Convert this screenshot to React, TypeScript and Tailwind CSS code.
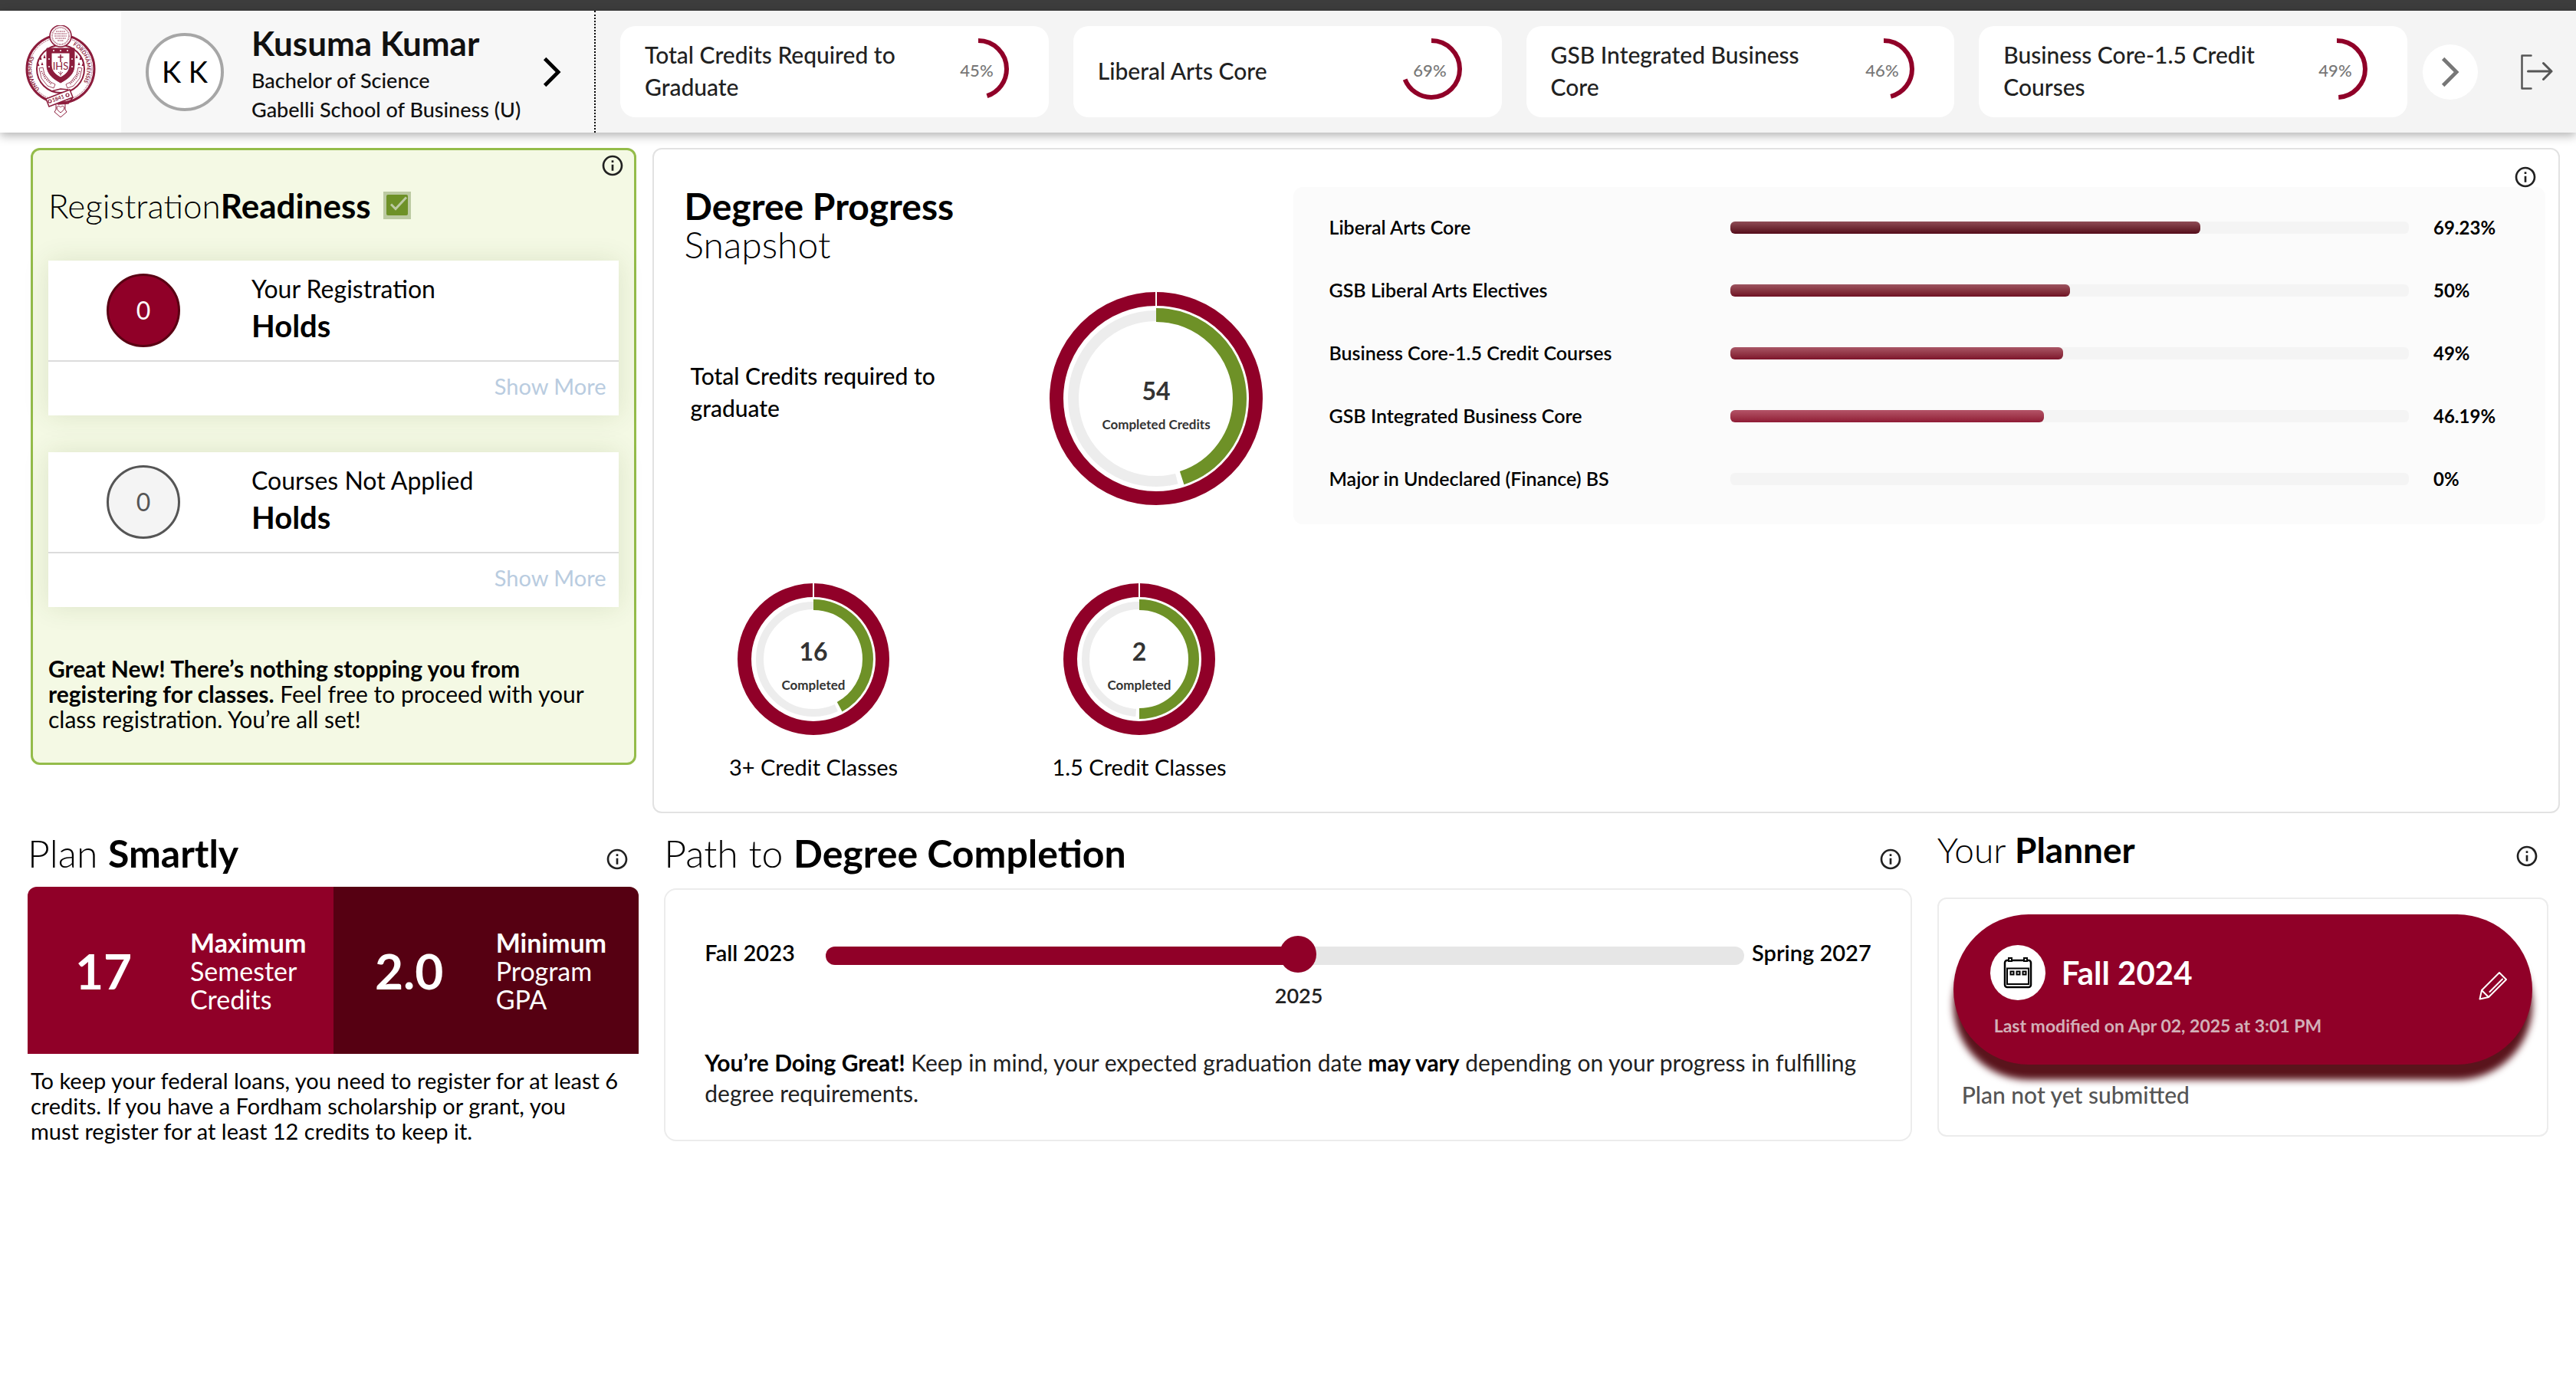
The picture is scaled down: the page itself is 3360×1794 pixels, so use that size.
import type { ReactNode } from 'react';
import { MdArrowForwardIos, MdInfoOutline } from 'react-icons/md';

const requirements = [
  { label: 'Total Credits Required to Graduate', percent: 45 },
  { label: 'Liberal Arts Core', percent: 69 },
  { label: 'GSB Integrated Business Core', percent: 46 },
  { label: 'Business Core-1.5 Credit Courses', percent: 49 },
];

const progressRows = [
  { label: 'Liberal Arts Core', percent: 69.23, fill: 'from-[#8f4c56] to-[#550b1b]' },
  { label: 'GSB Liberal Arts Electives', percent: 50, fill: 'from-[#9d5460] to-[#6f1024]' },
  { label: 'Business Core-1.5 Credit Courses', percent: 49, fill: 'from-[#a95666] to-[#7d132b]' },
  { label: 'GSB Integrated Business Core', percent: 46.19, fill: 'from-[#b45468] to-[#8f1a35]' },
  { label: 'Major in Undeclared (Finance) BS', percent: 0, fill: 'from-[#b45468] to-[#8f1a35]' },
];

// Position of the current year between the first and the last term (0-1000)
const pathValue = 515;

function InfoButton({ label, className = '' }: { label: string; className?: string }) {
  return (
    <button type="button" aria-label={label} className={`shrink-0 text-[#212121] ${className}`}>
      <MdInfoOutline size={32} />
    </button>
  );
}

function UniversitySeal() {
  return (
    <svg viewBox="0 0 92 120" className="h-[120px] w-[92px]" fill="none" stroke="#8c1c3c" aria-label="Fordham University">
      {/* buckle tail */}
      <path d="M40 98v12l-2 3 8 7 8-7-2-3V98z" fill="#fff" strokeWidth="1" />
      <path d="M41 107c2-3 4-1 5 0 1-1 3-3 5 0 0 4-3 5-5 7-2-2-5-3-5-7z" strokeWidth="1" />
      <circle cx="46" cy="57" r="44" fill="#fff" strokeWidth="3" />
      <circle cx="46" cy="57" r="41" strokeWidth="1" strokeDasharray="1 1" />
      <circle cx="46" cy="57" r="31" strokeWidth="2" />
      <path id="seal-left-arc" d="M22.5 86.500A37.500 37.500 0 0 1 32 22.300" stroke="none" />
      <path id="seal-right-arc" d="M62 26A34.800 34.800 0 0 1 63 87" stroke="none" />
      <g fill="#8c1c3c" stroke="none" fontSize="7" fontWeight="700">
        <text>
          <textPath href="#seal-left-arc" startOffset="5">UNIVERSITAS</textPath>
        </text>
        <text>
          <textPath href="#seal-right-arc">FORDHAMENSIS</textPath>
        </text>
      </g>
      {/* flames and ribbon either side of the shield */}
      <g fill="#8c1c3c" stroke="none">
        <path d="M20 40l1.500 5h-3zM25 38l1.500 5h-3zM22 48l1.500 4h-3zM17 49l1.500 4h-3zM67 38l1.500 5h-3zM72 40l1.500 5h-3zM70 48l1.500 4h-3zM75 49l1.500 4h-3z" />
      </g>
      <path d="M18 56l5-1 2 9 8 10 6 3-2 5-8-3-8-10zM74 56l-5-1-2 9-8 10-6 3 2 5 8-3 8-10z" strokeWidth=".8" />
      <path d="M21 60l5 9 8 8M71 60l-5 9-8 8" strokeWidth="2" strokeDasharray="1 1.500" />
      {/* shield */}
      <path d="M28 30h36v22c0 12-9 18-18 23-9-5-18-11-18-23z" fill="#8c1c3c" />
      <path d="M34 36h24v16c0 8-6 13-12 16-6-3-12-8-12-16z" fill="#fff" strokeWidth="1" />
      <g fill="#fff" stroke="none">
        <circle cx="37" cy="33" r="1" />
        <circle cx="46" cy="33" r="1" />
        <circle cx="55" cy="33" r="1" />
        <circle cx="31" cy="44" r="1" />
        <circle cx="61" cy="44" r="1" />
        <circle cx="31" cy="54" r="1" />
        <circle cx="61" cy="54" r="1" />
      </g>
      <path d="M46 38v10M42.500 41.500h7" strokeWidth="1.500" />
      <text x="46" y="58" textAnchor="middle" fontSize="13" fill="#8c1c3c" stroke="none">
        IHS
      </text>
      <path d="M43 61l3 3 3-3M46 60v6" strokeWidth=".8" />
      {/* upper medallion */}
      <circle cx="46" cy="14" r="14" fill="#fff" strokeWidth="1.500" />
      <circle cx="46" cy="14" r="11" strokeWidth="2" strokeDasharray="1 1" opacity=".7" />
      <path d="M40 8h12M38 11h16M38 14h16M39 17h14M42 20h8" strokeWidth="1.200" strokeDasharray="2 .5" opacity=".8" />
      {/* belt with the founding year */}
      <path d="M27 96l31-12 4 10-31 12z" fill="#fff" strokeWidth="1.500" />
      <path d="M34 86l12-3 10 1M62 94l-6 8-14 1" strokeWidth="1.500" />
      <circle cx="32" cy="99" r="2" strokeWidth="1.200" />
      <circle cx="55" cy="91" r="2" strokeWidth="1.200" />
      <text x="43" y="98" textAnchor="middle" fontSize="7" fontWeight="700" fill="#8c1c3c" stroke="none" transform="rotate(-20 42 96)">
        1841
      </text>
    </svg>
  );
}

function HeaderRing({ percent }: { percent: number }) {
  return (
    <svg viewBox="0 0 80 80" className="mr-5 mb-[7px] size-20 shrink-0">
      <circle
        cx="40"
        cy="40"
        r="37"
        fill="none"
        stroke="#900028"
        strokeWidth="6"
        pathLength="100"
        strokeDasharray={`${percent} 100`}
        transform="rotate(-90 40 40)"
      />
      <text x="38" y="50" textAnchor="middle" fontSize="22" fontWeight="500" fill="#777">
        {percent}%
      </text>
    </svg>
  );
}

type DonutProps = {
  radius: number;
  percent: number;
  value: string;
  caption: string;
  green: number;
  grey: number;
  className: string;
};

function Donut({ radius, percent, value, caption, green, grey, className }: DonutProps) {
  const size = radius * 2;
  const greenR = radius - 21 - green / 2;
  const greyR = radius - 24 - grey / 2;
  return (
    <svg viewBox={`0 0 ${size} ${size}`} className={className} fill="none">
      <circle cx={radius} cy={radius} r={radius - 9} stroke="#900028" strokeWidth="18" />
      <path d={`M${radius} 0v18`} stroke="#fff" strokeWidth="2" />
      <g transform={`rotate(-90 ${radius} ${radius})`}>
        <circle cx={radius} cy={radius} r={greyR} stroke="#ededed" strokeWidth={grey} />
        <circle
          cx={radius}
          cy={radius}
          r={greenR}
          stroke="#fff"
          strokeWidth={green + 2}
          pathLength="100"
          strokeDasharray={`${percent + 1} 100`}
        />
        <circle
          cx={radius}
          cy={radius}
          r={greenR}
          stroke="#6e9127"
          strokeWidth={green}
          pathLength="100"
          strokeDasharray={`${percent} 100`}
        />
      </g>
      <text x={radius} y={radius + 2} textAnchor="middle" fontSize="32" fontWeight="700" fill="#333">
        {value}
      </text>
      <text x={radius} y={radius + 40} textAnchor="middle" fontSize="17" fontWeight="700" fill="#333">
        {caption}
      </text>
    </svg>
  );
}

function HoldCard({ title, badge }: { title: string; badge: string }) {
  return (
    <div className="bg-white shadow-[0_0_32px_rgba(60,80,20,0.12)]">
      <div className="flex items-center border-b-2 border-[#dcdcdc] py-[17px] pl-[76px]">
        <span className={`flex size-24 shrink-0 items-center justify-center rounded-full text-[32px] ${badge}`}>0</span>
        <div className="pl-[93px]">
          <p className="text-[32px] leading-10">{title}</p>
          <p className="text-[40px] leading-[56px] font-bold">Holds</p>
        </div>
      </div>
      <div className="flex justify-end px-4 pt-3 pb-[18px]">
        <button type="button" className="text-[29px] leading-10 text-[#b9cce0]">
          Show More
        </button>
      </div>
    </div>
  );
}

function SectionTitle({ children, info }: { children: ReactNode; info: string }) {
  return (
    <div className="flex items-end justify-between pr-3">
      <h2 className="text-[50px] leading-[56px] font-light">{children}</h2>
      <InfoButton label={info} className="mb-1" />
    </div>
  );
}

function Header() {
  return (
    <header className="relative flex h-[159px] bg-[#f4f4f4] shadow-[0_4px_12px_rgba(0,0,0,0.3)]">
      <div className="flex w-[777px] shrink-0 items-center border-r-2 border-dotted border-black bg-[#f7f7f7]">
        <a href="#home" className="flex w-[158px] shrink-0 justify-center self-stretch bg-white pt-[19px]">
          <UniversitySeal />
        </a>
        <div className="ml-8 flex size-[102px] shrink-0 items-center justify-center rounded-full border-4 border-[#a6a6a6] bg-white text-[38px]">
          K K
        </div>
        <div className="ml-9 flex-1 whitespace-nowrap text-[#111]">
          <p className="text-[44px] leading-[60px] font-bold">Kusuma Kumar</p>
          <p className="text-[27px] leading-[38px] font-medium">Bachelor of Science</p>
          <p className="text-[27px] leading-[38px] font-medium">Gabelli School of Business (U)</p>
        </div>
        <button type="button" aria-label="Student details" className="mr-8">
          <MdArrowForwardIos size={46} />
        </button>
      </div>
      <ul className="grid flex-1 grid-cols-4 gap-8 py-5 pr-5 pl-8">
        {requirements.map((item) => (
          <li key={item.label} className="flex items-center justify-between rounded-[20px] bg-white px-8">
            <span className="max-w-[360px] pb-1 text-[30px] leading-[42px] font-medium text-[#212121]">
              {item.label}
            </span>
            <HeaderRing percent={item.percent} />
          </li>
        ))}
      </ul>
      <div className="flex shrink-0 items-center pr-[30px]">
        <button
          type="button"
          aria-label="Next requirements"
          className="flex size-[72px] items-center justify-center rounded-full bg-white text-[#777]"
        >
          <MdArrowForwardIos size={46} />
        </button>
        <button type="button" aria-label="Log out" className="ml-14">
          <svg viewBox="0 0 42 46" className="h-[46px] w-[42px]" fill="none" stroke="#555" strokeLinecap="round" strokeLinejoin="round">
            <path d="M13.500 1.500H1.500v43h12" strokeWidth="2.500" />
            <path d="M9.500 22H40M29.500 11.500L40 22 29.500 32.500" strokeWidth="3" />
          </svg>
        </button>
      </div>
    </header>
  );
}

function RegistrationReadiness() {
  return (
    <section className="relative rounded-xl border-3 border-[#94bc4a] bg-[#f4f9e4] px-5 pt-12 pb-10">
      <InfoButton label="About registration readiness" className="absolute top-1 right-3" />
      <div className="flex items-center">
        <h2 className="text-[44px] leading-[48px] font-light">
          Registration<b className="font-bold">Readiness</b>
        </h2>
        <svg viewBox="0 0 36 36" className="ml-4 size-9" role="img" aria-label="Ready">
          <path d="M0 0h36v36H0z" fill="#bccaa2" />
          <rect x="4" y="4" width="28" height="27" rx="2" fill="#6e9127" />
          <path d="M10 16.500l6 6L30 7.500" fill="none" stroke="#bccaa2" strokeWidth="3" />
        </svg>
      </div>
      <div className="mt-12 flex flex-col gap-12">
        <HoldCard title="Your Registration" badge="border-3 border-[#5a0013] bg-[#900028] text-white" />
        <HoldCard title="Courses Not Applied" badge="border-3 border-[#555] bg-[#f4f4f4] text-[#555]" />
      </div>
      <p className="mt-16 text-[30px] leading-[33px]">
        <b>Great New! There’s nothing stopping you from registering for classes.</b> Feel free to proceed with your
        class registration. You’re all set!
      </p>
    </section>
  );
}

function DegreeProgress() {
  return (
    <section className="relative flex rounded-xl border-2 border-[#e2e2e2] pt-[49px] pr-[17px] pb-[38px]">
      <div className="w-[834px] shrink-0">
        <h2 className="pl-10 text-[48px] leading-[50px] font-light">
          <b className="font-bold">Degree Progress</b>
          <br />
          Snapshot
        </h2>
        <div className="mt-[37px] flex items-center justify-between pr-10 pl-12">
          <p className="w-[340px] pb-[18px] text-[30px] leading-[42px] font-medium">Total Credits required to graduate</p>
          <Donut
            radius={139}
            percent={45}
            value="54"
            caption="Completed Credits"
            green={18}
            grey={14}
            className="size-[278px]"
          />
        </div>
        <div className="mt-[102px] grid grid-cols-2 gap-6 pl-2 text-[29px] leading-10">
          <figure className="flex flex-col items-center gap-[22px]">
            <Donut radius={99} percent={42} value="16" caption="Completed" green={14} grey={10} className="size-[198px]" />
            <figcaption>3+ Credit Classes</figcaption>
          </figure>
          <figure className="flex flex-col items-center gap-[22px]">
            <Donut radius={99} percent={50} value="2" caption="Completed" green={14} grey={10} className="size-[198px]" />
            <figcaption>1.5 Credit Classes</figcaption>
          </figure>
        </div>
      </div>
      <ul className="flex-1 self-start rounded-xl bg-[#fbfbfb] pt-3 pb-[18px] pl-[47px]">
        {progressRows.map((row) => (
          <li key={row.label} className="grid h-[82px] grid-cols-[33%_1fr_178px] items-center">
            <span className="text-[25px] font-semibold">{row.label}</span>
            <div className="h-4 overflow-hidden rounded-md bg-[#f4f4f4]">
              <div className={`h-4 rounded-r-md bg-linear-to-b ${row.fill}`} style={{ width: `${row.percent}%` }} />
            </div>
            <span className="pl-8 text-2xl font-bold">{row.percent}%</span>
          </li>
        ))}
      </ul>
      <InfoButton label="About degree progress" className="absolute top-5 right-[27px]" />
    </section>
  );
}

function PlanSmartly() {
  return (
    <section>
      <SectionTitle info="About planning limits">
        Plan <b className="font-bold">Smartly</b>
      </SectionTitle>
      <div className="mt-4 grid grid-cols-2 overflow-hidden rounded-t-xl text-[34px] leading-[37px] text-white">
        <div className="flex h-[218px] items-center bg-[#900028]">
          <span className="w-[198px] text-center text-[64px] font-bold">17</span>
          <p className="pl-3.5">
            <b>Maximum</b>
            <br />
            Semester
            <br />
            Credits
          </p>
        </div>
        <div className="flex h-[218px] items-center bg-[#560012]">
          <span className="w-[198px] text-center text-[64px] font-bold">2.0</span>
          <p className="pl-3.5">
            <b>Minimum</b>
            <br />
            Program
            <br />
            GPA
          </p>
        </div>
      </div>
      <p className="mt-[18px] px-1 text-[29px] leading-[33px]">
        To keep your federal loans, you need to register for at least 6 credits. If you have a Fordham scholarship or
        grant, you
        <br />
        must register for at least 12 credits to keep it.
      </p>
    </section>
  );
}

function PathToCompletion() {
  const fill = pathValue / 10;
  return (
    <section className="col-span-2">
      <SectionTitle info="About the path to completion">
        Path to <b className="font-bold">Degree Completion</b>
      </SectionTitle>
      <div className="mt-[18px] rounded-2xl border-2 border-[#ececec] px-[51px] pt-[62px] pb-[41px]">
        <div className="flex items-start text-[29px] leading-10 font-semibold">
          <label htmlFor="path" className="w-[158px] shrink-0">
            Fall 2023
          </label>
          <div className="flex-1">
            <input
              id="path"
              type="range"
              min={0}
              max={1000}
              defaultValue={pathValue}
              className="block h-12 w-full appearance-none bg-transparent [&::-webkit-slider-runnable-track]:h-6 [&::-webkit-slider-runnable-track]:rounded-xl [&::-webkit-slider-runnable-track]:bg-[linear-gradient(to_right,#900028_var(--fill),#e6e6e6_var(--fill))] [&::-webkit-slider-thumb]:-mt-3.5 [&::-webkit-slider-thumb]:size-12 [&::-webkit-slider-thumb]:appearance-none [&::-webkit-slider-thumb]:rounded-full [&::-webkit-slider-thumb]:bg-[#900028]"
              style={{ ['--fill' as string]: `${fill}%` }}
            />
            <div className="mt-3" style={{ paddingLeft: `${fill}%` }}>
              <output htmlFor="path" className="block w-max -translate-x-1/2 text-[27px] leading-8 text-[#212121]">
                2025
              </output>
            </div>
          </div>
          <span className="shrink-0 pl-2.5">Spring 2027</span>
        </div>
        <p className="mt-[51px] text-[30px] leading-10 text-[#212121]">
          <b className="text-black">You’re Doing Great!</b> Keep in mind, your expected graduation date{' '}
          <b className="text-black">may vary</b> depending on your progress in fulfilling degree requirements.
        </p>
      </div>
    </section>
  );
}

function Planner() {
  return (
    <section>
      <div className="flex items-end justify-between pr-3">
        <h2 className="text-[46px] leading-[48px] font-light">
          Your <b className="font-bold">Planner</b>
        </h2>
        <InfoButton label="About your planner" />
      </div>
      <div className="mt-[38px] rounded-xl border-2 border-[#ececec] px-[19px] pt-5 pb-[33px]">
        <div className="flex items-center justify-between rounded-[98px] bg-[#900028] pt-10 pr-8 pb-[35px] pl-12 text-white shadow-[0_20px_10px_#5a141c]">
          <div>
            <div className="flex items-center gap-[21px]">
              <span className="flex size-[72px] items-center justify-center rounded-full bg-white">
                <svg viewBox="0 0 38 42" className="h-[42px] w-[38px]" fill="none" stroke="#000" strokeWidth="2.500">
                  <path d="M7 5H5a3 3 0 0 0-3 3v29a3 3 0 0 0 3 3h28a3 3 0 0 0 3-3V8a3 3 0 0 0-3-3h-2M11 5h16" />
                  <path d="M7 2h4v4H7zM27 2h4v4h-4z" strokeWidth="2" />
                  <path d="M5 15.500h28V36H5z" strokeWidth="2" />
                  <path d="M9.500 19.500h4v4h-4zM17.500 19.500h4v4h-4zM25.500 19.500h4v4h-4z" strokeWidth="2" />
                </svg>
              </span>
              <h3 className="text-[42px] font-bold">Fall 2024</h3>
            </div>
            <p className="mt-[17px] pl-[5px] text-[23px] leading-8 font-bold text-[#d2b0b8]">
              Last modified on Apr 02, 2025 at 3:01 PM
            </p>
          </div>
          <button type="button" aria-label="Edit Fall 2024 plan" className="mb-4">
            <svg viewBox="0 0 38 38" className="size-[38px]" fill="none" stroke="#fff" strokeWidth="2" strokeLinejoin="round" strokeLinecap="round">
              <path d="M1.500 36.500L4 25 27 2l9 9-23 23zM4 25l9 9M14.500 27L31 10.500" />
            </svg>
          </button>
        </div>
        <p className="mt-[19px] px-[11px] text-[30px] leading-10 font-medium text-[#555]">Plan not yet submitted</p>
      </div>
    </section>
  );
}

export default function App() {
  return (
    <div className="min-h-screen bg-white font-['Lato','Open_Sans',sans-serif] text-black">
      <div className="h-3.5 bg-[#3d3d3d]" />
      <Header />
      <main>
        <div className="grid grid-cols-[79fr_249fr] items-start gap-[21px] pt-5 pr-[21px] pl-10">
          <RegistrationReadiness />
          <DegreeProgress />
        </div>
        <div className="grid grid-cols-4 items-start gap-[33px] px-9 pt-6">
          <PlanSmartly />
          <PathToCompletion />
          <Planner />
        </div>
      </main>
    </div>
  );
}
